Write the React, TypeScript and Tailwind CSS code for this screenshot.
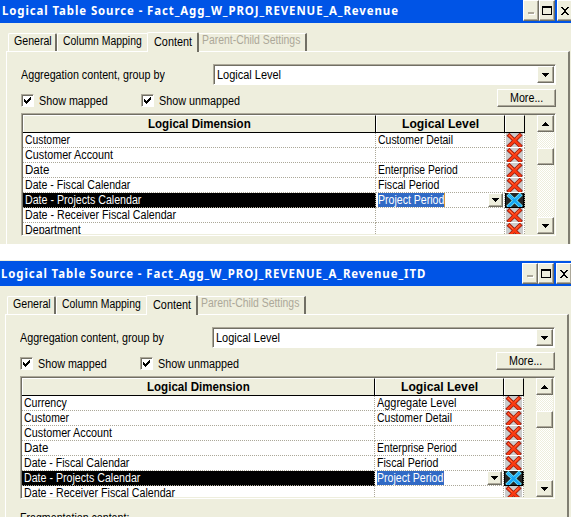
import { useLayoutEffect, useRef, useState } from "react";
import type { ReactNode } from "react";

/** Single line of text, condensed or widened to the given pixel width. */
function Fit({ w, children, className = "" }: { w: number; children: ReactNode; className?: string }) {
  const ref = useRef<HTMLSpanElement>(null);
  const [scale, setScale] = useState(1);
  useLayoutEffect(() => {
    if (ref.current) setScale(w / ref.current.offsetWidth);
  }, [w]);
  return (
    <span className={`block shrink-0 whitespace-nowrap ${className}`} style={{ width: w }}>
      <span ref={ref} className="inline-block origin-left" style={{ transform: `scaleX(${scale})` }}>
        {children}
      </span>
    </span>
  );
}

const raised =
  "bg-[#eeeedd] border border-t-white border-l-white border-r-[#716f64] border-b-[#716f64] shadow-[inset_-1px_-1px_0_#aca899]";
const sunken =
  "border border-t-[#aca899] border-l-[#aca899] border-r-white border-b-white shadow-[inset_1px_1px_0_#716f64]";

function Arrow({ up = false }: { up?: boolean }) {
  return (
    <svg width="7" height="4" viewBox="0 0 7 4" shapeRendering="crispEdges" className={up ? "rotate-180" : ""}>
      <path d="M0 0h7v1H6v1H5v1H4v1H3V3H2V2H1V1H0z" fill="#000" />
    </svg>
  );
}

function Cross({ active = false }: { active?: boolean }) {
  return (
    <svg width="17" height="15" viewBox="0 0 17 15" className="block">
      <path d="M3.4 2.6 14 12.8M13.8 2.4 3.2 12.8" stroke={active ? "#77efff" : "#8d1a10"} strokeWidth="4" strokeLinecap="square" />
      <path d="M3.4 2.6 14 12.8M13.8 2.4 3.2 12.8" stroke={active ? "#16a5f5" : "#fa3a12"} strokeWidth="2.6" strokeLinecap="square" />
      <path d="M3 2 7 6M13.4 2.2 9.8 5.6" stroke={active ? "#45c4ff" : "#ff7846"} strokeWidth="1" />
    </svg>
  );
}

function Check({ label, w }: { label: string; w: number }) {
  return (
    <div className="flex h-[13px] w-[120px] items-center">
      <div className={`flex h-[13px] w-[13px] items-center justify-center bg-white ${sunken}`}>
        <svg width="7" height="7" viewBox="0 0 7 7" shapeRendering="crispEdges">
          <path d="M0 2h1v1h1v1h1V3h1V2h1V1h1V0h1v3H6v1H5v1H4v1H3v1H2V6H1V5H0z" fill="#000" />
        </svg>
      </div>
      <Fit w={w} className="ml-[5px]">{label}</Fit>
    </div>
  );
}

type Row = { name: string; w: number; level?: string; lw?: number; selected?: boolean };

function TableRow({ row, caret }: { row: Row; caret: boolean }) {
  const line = "border-dotted border-[#aca899]";
  return (
    <div className="flex h-[15px] shrink-0">
      <div className={`flex w-[353px] items-center border-r border-b pl-[2px] ${line} ${row.selected ? "bg-black text-white" : ""}`}>
        <Fit w={row.w}>{row.name}</Fit>
      </div>
      <div className={`flex w-[129px] items-center border-r border-b pl-[2px] ${line}`}>
        {row.level &&
          (row.selected ? (
            <>
              <div className={`flex h-[14px] w-[67px] items-center bg-[#316ac5] text-white ${caret ? "border-r border-[#ce953a]" : ""}`}>
                <Fit w={row.lw ?? 0}>{row.level}</Fit>
              </div>
              <div className={`mr-[1px] ml-auto flex h-[14px] w-[15px] items-center justify-center ${raised}`}>
                <Arrow />
              </div>
            </>
          ) : (
            <Fit w={row.lw ?? 0}>{row.level}</Fit>
          ))}
      </div>
      <div className={`w-[20px] border-r pl-[1px] ${line} ${row.selected ? "bg-black" : ""}`}>
        <div className={`h-[14px] w-[17px] overflow-hidden ${row.selected ? "bg-[#252525]" : "bg-[#cccccc]"}`}>
          <Cross active={row.selected} />
        </div>
      </div>
    </div>
  );
}

function SourceWindow({ title, tw, rows, caret = false, children }: { title: string; tw: number; rows: Row[]; caret?: boolean; children?: ReactNode }) {
  return (
    <section className="flex h-full w-[573px] flex-col bg-[#eeeedd]">
      <header className="flex h-[25px] shrink-0 items-start bg-[#0054e6] pt-[2px] text-white">
        <Fit w={tw} className="ml-[2px] pt-[1px] font-['Noto_Sans',sans-serif] text-[12.5px] leading-[19px] font-bold tracking-[1px]">{title}</Fit>
        <div className="ml-auto flex">
          <div className={`flex h-[21px] w-[16px] items-end justify-center pb-[6px] ${raised}`}>
            <i className="h-[2px] w-[6px] bg-[#aca899] shadow-[1px_1px_0_white]" />
          </div>
          <div className={`flex h-[21px] w-[16px] items-center justify-center ${raised}`}>
            <i className="h-[9px] w-[10px] border border-t-2 border-black" />
          </div>
          <div className={`ml-[2px] flex h-[21px] w-[16px] items-center justify-center ${raised}`}>
            <svg width="8" height="8" viewBox="0 0 8 8" shapeRendering="crispEdges">
              <path d="M0 0h2v1h1v1h2V1h1V0h2v1H7v1H6v1H5v2h1v1h1v1h1v1H6V7H5V6H3v1H2v1H0V7h1V6h1V5h1V3H2V2H1V1H0z" fill="#000" />
            </svg>
          </div>
        </div>
      </header>

      <nav className="mt-[8px] flex h-[20px] shrink-0 items-end pl-[8px]">
        <div className="flex h-[18px] w-[49px] items-center rounded-t-[2px] border-t border-l border-r-2 border-t-white border-l-white border-r-[#716f64] pb-[3px] pl-[5px]">
          <Fit w={38}>General</Fit>
        </div>
        <div className="flex h-[18px] w-[90px] items-center rounded-tl-[2px] border-t border-l border-white pb-[3px] pl-[5px]">
          <Fit w={79}>Column Mapping</Fit>
        </div>
        <div className="z-10 -mb-[1px] flex h-[20px] w-[52px] items-center rounded-t-[2px] border-t border-l border-r-2 border-t-white border-l-white border-r-[#716f64] bg-[#eeeedd] pb-[1px] pl-[6px]">
          <Fit w={38}>Content</Fit>
        </div>
        <div className="flex h-[18px] w-[108px] items-center border-t border-r-2 border-t-white border-r-[#716f64] pb-[5px] pl-[3px] text-[#aca899]">
          <Fit w={98}>Parent-Child Settings</Fit>
        </div>
      </nav>

      <main className="ml-[6px] flex w-[564px] flex-1 flex-col border-t border-l border-r-2 border-t-white border-l-white border-r-[#807e72] pl-[14px]">
        <div className="mt-[12px] flex h-[21px] shrink-0 items-center">
          <Fit w={144}>Aggregation content, group by</Fit>
          <div className={`mr-[12px] ml-auto flex h-[21px] w-[343px] items-center bg-white pr-[1px] pl-[3px] ${sunken}`}>
            <Fit w={64}>Logical Level</Fit>
            <div className={`ml-auto flex h-[17px] w-[17px] items-center justify-center ${raised}`}>
              <Arrow />
            </div>
          </div>
        </div>
        <div className="mt-[4px] flex h-[18px] shrink-0 items-center">
          <div className="mt-[5px] flex">
            <Check label="Show mapped" w={69} />
            <Check label="Show unmapped" w={81} />
          </div>
          <div className={`mr-[12px] ml-auto flex h-[18px] w-[59px] items-center justify-center ${raised}`}>
            <Fit w={33}>More...</Fit>
          </div>
        </div>

        <div className={`mt-[6px] flex h-[123px] w-[535px] shrink-0 bg-[#eeeedd] p-px ${sunken}`}>
          <div className="flex w-[502px] flex-col overflow-hidden">
            <div className="flex h-[18px] shrink-0 border-b border-black font-bold">
              <div className="flex w-[353px] items-center justify-center border-t border-r border-l border-t-white border-r-black border-l-white">
                <Fit w={103}>Logical Dimension</Fit>
              </div>
              <div className="flex w-[129px] items-center justify-center border-t border-r border-l border-t-white border-r-black border-l-white">
                <Fit w={77}>Logical Level</Fit>
              </div>
              <div className="w-[20px] border-t border-r border-l border-t-white border-r-black border-l-white" />
            </div>
            <div className="flex-1 overflow-hidden bg-white">
              {rows.map((r) => (
                <TableRow key={r.name} row={r} caret={caret} />
              ))}
            </div>
          </div>
          <div className="ml-auto flex w-[17px] flex-col bg-[repeating-conic-gradient(#ffffff_0_25%,#eeeedd_0_50%)] bg-[length:2px_2px]">
            <div className={`flex h-[17px] items-center justify-center ${raised}`}><Arrow up /></div>
            <div className={`mt-[16px] h-[17px] ${raised}`} />
            <div className={`mt-auto flex h-[17px] items-center justify-center ${raised}`}><Arrow /></div>
          </div>
        </div>
        {children}
      </main>
    </section>
  );
}

const customer: Row = { name: "Customer", w: 45, level: "Customer Detail", lw: 75 };
const shared: Row[] = [
  { name: "Customer Account", w: 88 },
  { name: "Date", w: 24, level: "Enterprise Period", lw: 80 },
  { name: "Date - Fiscal Calendar", w: 105, level: "Fiscal Period", lw: 61 },
  { name: "Date - Projects Calendar", w: 116, level: "Project Period", lw: 66, selected: true },
  { name: "Date - Receiver Fiscal Calendar", w: 151 },
];

export default function App() {
  return (
    <div className="flex h-[517px] w-[571px] flex-col overflow-hidden bg-white font-['Liberation_Sans',Arial,sans-serif] text-[12px] leading-[14px] text-black">
      <div className="-mt-[2px] h-[246px] shrink-0">
        <SourceWindow
          title="Logical Table Source - Fact_Agg_W_PROJ_REVENUE_A_Revenue"
          tw={397}
          caret
          rows={[customer, ...shared, { name: "Department", w: 56 }]}
        />
      </div>
      <div className="mt-[16px] -ml-[1px] h-[257px] shrink-0 border-t border-[#eeeedd]">
        <SourceWindow
          title="Logical Table Source - Fact_Agg_W_PROJ_REVENUE_A_Revenue_ITD"
          tw={425}
          rows={[{ name: "Currency", w: 43, level: "Aggregate Level", lw: 79 }, customer, ...shared]}
        >
          <Fit w={109} className="mt-[12px]">Fragmentation content:</Fit>
        </SourceWindow>
      </div>
    </div>
  );
}
